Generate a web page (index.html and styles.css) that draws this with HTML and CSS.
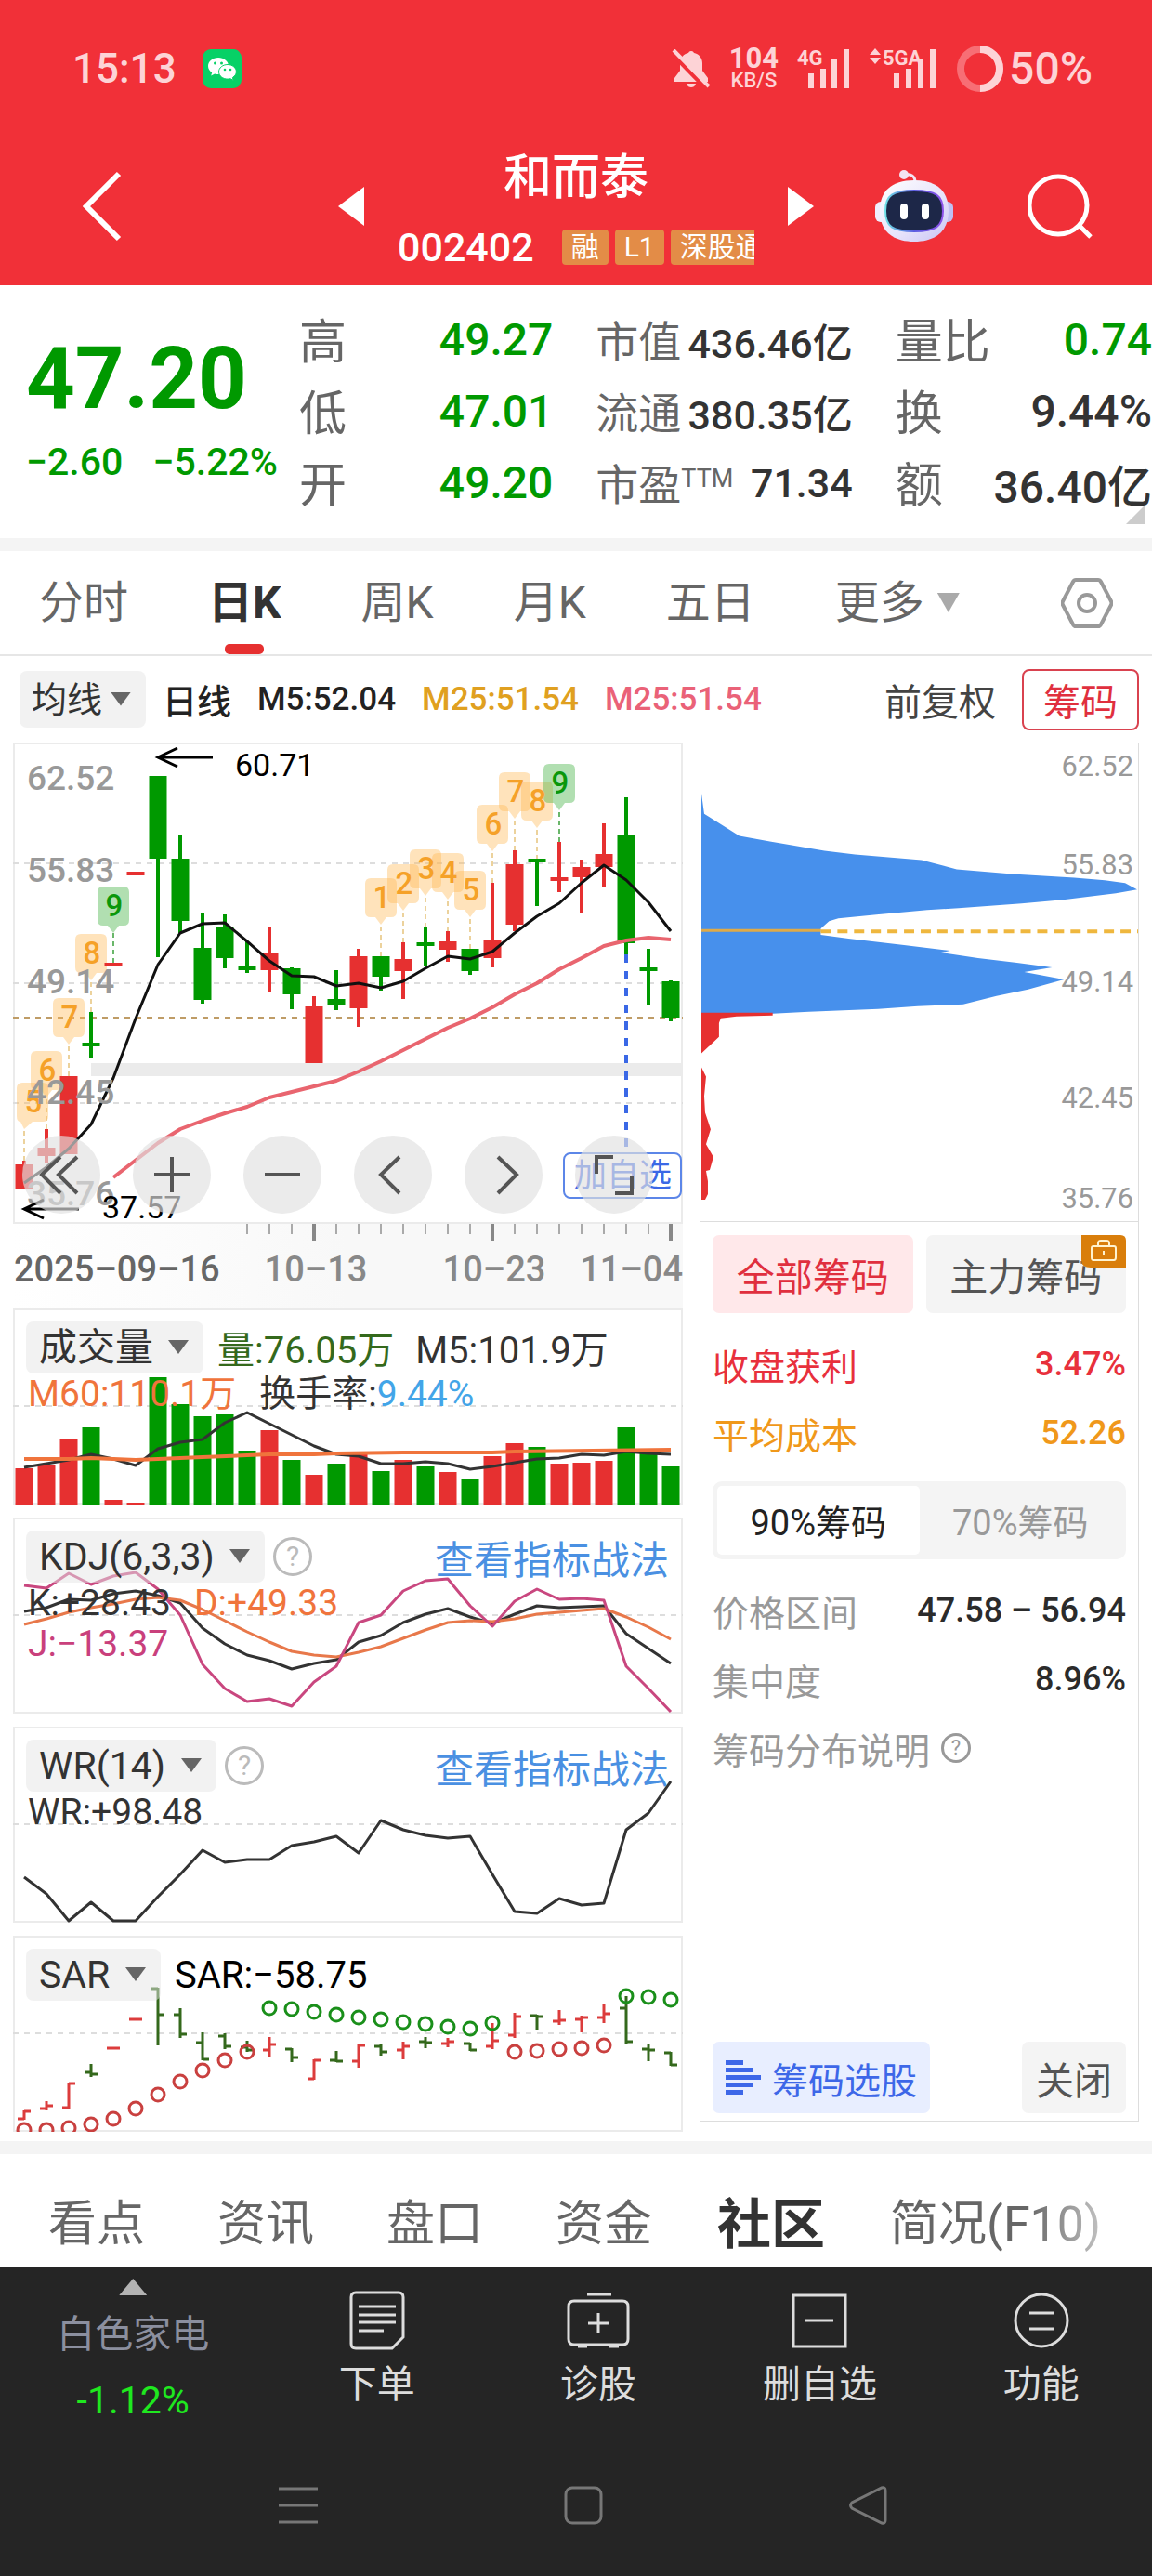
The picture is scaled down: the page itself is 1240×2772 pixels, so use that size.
FILE: index.html
```html
<!DOCTYPE html>
<html lang="zh-CN">
<head>
<meta charset="utf-8">
<meta name="viewport" content="width=device-width, initial-scale=1">
<title>和而泰 002402</title>
<link rel="stylesheet" href="styles.css">
</head>
<body>
<header class="top">
  <div class="status">
    <div class="status-side">
      <span class="clock">15:13</span>
      <svg class="wechat" width="42" height="42" viewBox="0 0 42 42" aria-label="微信">
        <rect width="42" height="42" rx="9" fill="#07d166"/>
        <path d="M17 9c-6.100 0-11 4-11 9 0 3 1.600 5.400 4.200 7l-1 3.600 3.900-2.100c1.300.400 2.500.500 3.900.500 6 0 11-4 11-9s-5-9-11-9z" fill="#fff"/>
        <path d="M27 16.500c-5.200 0-9.500 3.500-9.500 7.800s4.300 7.800 9.500 7.800c1.100 0 2.100-.1 3-.4l3.200 1.700-.8-2.900c2.400-1.500 4-3.700 4-6.200 0-4.300-4.200-7.800-9.400-7.800z" fill="#fff" stroke="#07d166"/>
        <g fill="#07d166"><circle cx="13.500" cy="15" r="1.500"/><circle cx="20.500" cy="15" r="1.500"/><circle cx="24" cy="22" r="1.300"/><circle cx="30" cy="22" r="1.300"/></g>
      </svg>
    </div>
    <div class="status-side status-right">
      <svg width="42" height="42" viewBox="0 0 42 42" fill="#fdd3d6" aria-label="静音">
        <path d="M21 2a3 3 0 0 1 3 2c5 1 9 5 9 11v8l6 8v4H3v-4l6-8v-8c0-6 4-10 9-11a3 3 0 0 1 3-2zM16 37h10c-1 3-3 4-5 4s-4-1-5-4z"/>
        <path d="M0 4 38 43" stroke="#f13038" stroke-width="5"/><path d="m2 1 38 39" stroke="#fdd3d6" stroke-width="4"/>
      </svg>
      <span class="speed"><b>104</b><small>KB/S</small></span>
      <svg width="58" height="46" viewBox="0 0 58 46" fill="#fdd3d6" aria-label="4G">
        <text class="net" x="0" y="19">4G</text>
        <path d="M12 28h6v16h-6zM25 23h6v21h-6zM37 12h6v32h-6zM50 2h6v42h-6z"/>
      </svg>
      <svg width="74" height="46" viewBox="0 0 74 46" fill="#fdd3d6" aria-label="5GA">
        <path d="m6 1 6 7H0zM0 11h12l-6 7z"/>
        <text class="net" x="14" y="19">5GA</text>
        <path d="M26 28h6v16h-6zM39 23h6v21h-6zM52 12h6v32h-6zM65 2h6v42h-6z"/>
      </svg>
      <svg width="50" height="50" viewBox="0 0 50 50" fill="none" stroke-width="8" aria-hidden="true">
        <circle cx="25" cy="25" r="21" stroke="#f76e75"/><path d="M25 4a21 21 0 0 1 0 42" stroke="#fdd3d6"/>
      </svg>
      <span class="battery">50%</span>
    </div>
  </div>
  <div class="titlebar">
    <button class="icon-btn back" aria-label="返回"><svg width="48" height="76" viewBox="0 0 48 76" fill="none" stroke="#fff" stroke-width="6"><path d="M42 3 7 38l35 35"/></svg></button>
    <div class="title-center">
      <button class="icon-btn" aria-label="上一只"><svg width="28" height="42" viewBox="0 0 28 42" fill="#fff"><path d="M28 0v42L0 21z"/></svg></button>
      <div class="stock">
        <h1>和而泰</h1>
        <div class="stock-code"><span>002402</span><i>融</i><i>L1</i><i>深股通</i></div>
      </div>
      <button class="icon-btn" aria-label="下一只"><svg width="28" height="42" viewBox="0 0 28 42" fill="#fff"><path d="M0 0v42l28-21z"/></svg></button>
    </div>
    <div class="title-actions">
      <button class="icon-btn" aria-label="智能助手">
        <svg width="84" height="78" viewBox="0 0 84 78">
          <defs>
            <linearGradient id="shell" x1="0" y1="0" x2="1" y2="1"><stop offset="0" stop-color="#fff"/><stop offset=".6" stop-color="#e6e2fb"/><stop offset="1" stop-color="#c8c4f4"/></linearGradient>
            <linearGradient id="rim" x1="0" y1="0" x2="1" y2="0"><stop offset="0" stop-color="#6fe0e6"/><stop offset=".5" stop-color="#5b5ce0"/><stop offset="1" stop-color="#8d52ea"/></linearGradient>
          </defs>
          <path d="M32 5c6-1 11 1 11 8" fill="none" stroke="#f3e4f2" stroke-width="3"/><circle cx="31" cy="5" r="5" fill="#f3e4f2"/>
          <rect x="0" y="34" width="14" height="22" rx="6" fill="#efeefe"/><rect x="70" y="34" width="14" height="22" rx="6" fill="#bfc0f2"/>
          <path d="M42 11c25 0 37 12 37 33S66 77 42 77 5 65 5 44s12-33 37-33z" fill="url(#shell)"/>
          <path d="M42 22c23 0 31 5 31 22s-8 22-31 22-31-5-31-22 8-22 31-22z" fill="#1d2748" stroke="url(#rim)" stroke-width="2"/>
          <rect x="27" y="36" width="8" height="17" rx="4" fill="#fff"/><rect x="50" y="36" width="8" height="17" rx="4" fill="#fff"/>
        </svg>
      </button>
      <button class="icon-btn" aria-label="搜索"><svg width="70" height="70" viewBox="0 0 70 70" fill="none" stroke="#fff" stroke-width="5"><circle cx="33" cy="34" r="31"/><path d="m55 55 13 13"/></svg></button>
    </div>
  </div>
</header>

<main>
<section class="quote">
  <div class="price">
    <strong>47.20</strong>
    <div class="change"><span>−2.60</span><span>−5.22%</span></div>
  </div>
  <dl class="stats stats-wide">
    <div><dt>高</dt><dd class="down">49.27</dd></div>
    <div><dt>低</dt><dd class="down">47.01</dd></div>
    <div><dt>开</dt><dd class="down">49.20</dd></div>
  </dl>
  <dl class="stats">
    <div><dt>市值</dt><dd>436.46亿</dd></div>
    <div><dt>流通</dt><dd>380.35亿</dd></div>
    <div><dt>市盈<sup>TTM</sup></dt><dd>71.34</dd></div>
  </dl>
  <dl class="stats stats-wide">
    <div><dt>量比</dt><dd class="down">0.74</dd></div>
    <div><dt>换</dt><dd>9.44%</dd></div>
    <div><dt>额</dt><dd>36.40亿</dd></div>
  </dl>
</section>

<nav class="periods">
  <a href="#">分时</a><a href="#" class="on" aria-current="page">日K</a><a href="#">周K</a><a href="#">月K</a><a href="#">五日</a><a href="#" class="more">更多</a>
  <button class="icon-btn gear" aria-label="设置"><svg width="56" height="56" viewBox="0 0 56 56" fill="none" stroke="#999" stroke-width="4"><path d="M16 3h24q2 0 3 2l11 21q1 2 0 4L43 51q-1 2-3 2H16q-2 0-3-2L2 30q-1-2 0-4L13 5q1-2 3-2z"/><circle cx="28" cy="28" r="9"/></svg></button>
</nav>

<div class="averages">
  <label class="pick"><select aria-label="均线指标"><option>均线</option></select></label>
  <span class="dark">日线</span><span class="dark ma">M5:52.04</span><span class="gold ma">M25:51.54</span><span class="rose ma">M25:51.54</span>
  <a href="#" class="adjust">前复权</a>
  <button class="chips-btn">筹码</button>
</div>

<div class="board">
<div class="charts">
  <div class="panel">
    <svg viewBox="14 799 721 518" role="img" aria-label="日K线图">
      <defs>
        <path id="tag" d="M-11 0h22q6 0 6 6v30q0 6-6 6H6L0 50l-6-8h-5q-6 0-6-6V6q0-6 6-6z"/>
      </defs>
      <path class="grid" d="M14 929h721M14 1058h721M14 1187h721"/>
      <path d="M98 1144h637v14H98z" fill="#ebebeb"/>
      <path d="M14 1095h721" stroke="#bf9c66" stroke-width="2" stroke-dasharray="6 6"/>
      <g class="lead">
        <path d="M26 1217v32M50 1183v32M74 1126v32M98 1057v32M410 997v32M434 982v32M458 966v32M482 970v32M506 989v32M530 918v32M554 883v32M578 893v32"/>
        <path class="lead-g" d="M122 1004v32M602 874v32"/>
      </g>
      <g class="tags">
        <path d="M24 1165h22q6 0 6 6v30q0 6-6 6H35l-9 8-4-8q-4 0-4-6v-30q0-6 6-6z"/>
        <use href="#tag" x="50" y="1131"/><use href="#tag" x="74" y="1074"/><use href="#tag" x="98" y="1005"/>
        <use href="#tag" x="410" y="945"/><use href="#tag" x="434" y="930"/><use href="#tag" x="458" y="914"/><use href="#tag" x="482" y="918"/><use href="#tag" x="506" y="937"/><use href="#tag" x="530" y="866"/><use href="#tag" x="554" y="831"/><use href="#tag" x="578" y="841"/>
        <use class="tag-g" href="#tag" x="122" y="954"/><use class="tag-g" href="#tag" x="602" y="822"/>
      </g>
      <g class="digits">
        <text x="36" y="1197">5</text><text x="51" y="1163">6</text><text x="75" y="1106">7</text><text x="99" y="1037">8</text><text class="digit-g" x="123" y="986">9</text>
        <text x="411" y="977">1</text><text x="435" y="962">2</text><text x="459" y="946">3</text><text x="483" y="950">4</text><text x="507" y="969">5</text><text x="531" y="898">6</text><text x="555" y="863">7</text><text x="579" y="873">8</text><text class="digit-g" x="603" y="854">9</text>
      </g>
      <path class="wick up" d="M26 1249V1280M50 1215V1251M290 997V1068M338 1072V1144M386 1021V1105M434 1014V1075M482 1002V1035M530 950V1041M554 915V1002M602 906V960M626 925V983M650 886V954"/>
      <path class="body up" d="M26 1253V1279M50 1235V1244M74 1158V1242M122 1036V1040M146 938V942M290 1026V1044M338 1083V1144M386 1029V1085M434 1032V1045M482 1013V1022M530 1012V1031M554 930V995M602 944V948M626 933V944M650 919V933"/>
      <path class="wick dn" d="M98 1089V1138M170 835V1030M194 899V1004M218 983V1080M242 984V1042M266 1013V1047M314 1041V1086M362 1044V1087M410 1029V1066M458 998V1039M506 1021V1049M578 925V975M674 858V1027M698 1021V1082M722 1055V1099"/>
      <path class="body dn" d="M98 1122V1126M170 835V924M194 924V991M218 1020V1076M242 998V1031M266 1040V1044M314 1042V1070M362 1075V1082M410 1029V1051M458 1014V1018M506 1021V1045M578 924V928M674 899V1015M698 1041V1045M722 1056V1095"/>
      <polyline class="line thick" stroke="#e9656f" points="122,1267 170,1230 194,1215 218,1206 242,1198 266,1191 290,1181 338,1169 362,1163 386,1153 410,1142 434,1130 458,1118 482,1106 506,1096 530,1084 554,1070 578,1058 602,1043 626,1031 650,1018 674,1012 698,1009 722,1011"/>
      <polyline class="line" stroke="#111" points="26,1273 50,1256 74,1236 98,1210 122,1160 146,1096 170,1038 194,1004 218,994 242,993 266,1013 290,1034 314,1050 338,1051 362,1061 386,1058 410,1063 434,1056 458,1042 482,1029 506,1032 530,1024 554,1004 578,986 602,972 626,950 650,931 674,947 698,971 722,1002"/>
      <path d="M674 1027v213" stroke="#3a68e6" stroke-width="4" stroke-dasharray="9 9"/>
      <g class="axis-y">
        <text x="29" y="850">62.52</text><text x="29" y="949">55.83</text><text x="29" y="1069">49.14</text><text x="29" y="1188">42.45</text><text x="29" y="1297">35.76</text>
      </g>
      <path d="M229 815h-58M191 805l-21 10 21 10M85 1301H27M47 1291l-21 10 21 10" fill="none" stroke="#000" stroke-width="3"/>
      <text class="peak" x="253" y="835">60.71</text><text class="peak" x="110" y="1311">37.57</text>
      <rect x="607" y="1241" width="126" height="48" rx="7" fill="#fff" stroke="#5c86e8" stroke-width="2"/>
      <text class="watch" x="618" y="1277">加自选</text>
    </svg>
    <div class="tools">
      <button aria-label="最左"><svg viewBox="0 0 84 84"><path d="M41 23 21 42l20 20M59 23 39 42l20 20"/></svg></button>
      <button aria-label="放大"><svg viewBox="0 0 84 84"><path d="M42 23v38M23 42h38"/></svg></button>
      <button aria-label="缩小"><svg viewBox="0 0 84 84"><path d="M23 42h38"/></svg></button>
      <button aria-label="左移"><svg viewBox="0 0 84 84"><path d="M49 23 29 42l20 20"/></svg></button>
      <button aria-label="右移"><svg viewBox="0 0 84 84"><path d="m36 23 20 19-20 20"/></svg></button>
      <button aria-label="全屏"><svg viewBox="0 0 84 84"><path d="M23 41V23h18M61 44v18H43"/></svg></button>
    </div>
  </div>
  <svg class="dates" viewBox="14 1317 721 91" role="img" aria-label="日期">
    <path d="M266 1317v11M290 1317v11M314 1317v11M362 1317v11M386 1317v11M410 1317v11M434 1317v11M458 1317v11M482 1317v11M506 1317v11M554 1317v11M578 1317v11M602 1317v11M626 1317v11M650 1317v11M674 1317v11M698 1317v11" stroke="#aaa" stroke-width="2"/>
    <path d="M338 1317v18M530 1317v18M722 1317v18" stroke="#888" stroke-width="4"/>
    <text x="15" y="1379" fill="#666">2025–09–16</text><text x="340" y="1379" text-anchor="middle">10–13</text><text x="532" y="1379" text-anchor="middle">10–23</text><text x="735" y="1379" text-anchor="end">11–04</text>
  </svg>

  <div class="panel">
    <svg viewBox="14 1408 721 211" role="img" aria-label="成交量">
      <path class="grid" d="M14 1513h721"/>
      <path class="body up" d="M26 1580V1619M50 1576V1619M74 1548V1619M122 1614V1619M146 1617V1619M290 1539V1619M338 1587V1619M386 1562V1619M434 1571V1619M482 1584V1619M530 1567V1619M554 1553V1619M602 1575V1619M626 1574V1619M650 1572V1619"/>
      <path class="body dn" d="M98 1536V1619M170 1482V1619M194 1511V1619M218 1524V1619M242 1522V1619M266 1561V1619M314 1571V1619M362 1575V1619M410 1583V1619M458 1578V1619M506 1592V1619M578 1557V1619M674 1536V1619M698 1564V1619M722 1578V1619"/>
      <polyline class="line" stroke="#333" points="26,1579 50,1575 74,1571 98,1565 122,1570 146,1577 170,1559 194,1552 218,1549 242,1531 266,1520 290,1532 314,1544 338,1556 362,1565 386,1567 410,1575 434,1575 458,1573 482,1575 506,1581 530,1578 554,1574 578,1570 602,1569 626,1565 650,1566 674,1562 698,1564 722,1565"/>
      <polyline class="line thick" stroke="#f0743c" points="26,1570 74,1570 98,1569 146,1571 218,1568 290,1565 338,1565 362,1564 434,1563 530,1563 554,1562 722,1560"/>
    </svg>
    <div class="readout">
      <div class="readout-row"><label class="pick"><select aria-label="成交量指标"><option>成交量</option></select></label><span class="moss">量:76.05万</span><span class="m5">M5:101.9万</span></div>
      <div class="values"><span class="orange">M60:110.1万</span><span>换手率:<em>9.44%</em></span></div>
    </div>
  </div>

  <div class="panel">
    <svg viewBox="14 1633 721 211" role="img" aria-label="KDJ">
      <path class="grid" d="M14 1738h721"/>
      <polyline class="line" stroke="#333" points="26,1734 50,1730 74,1721 98,1722 122,1715 146,1712 170,1717 194,1725 218,1752 242,1769 266,1781 290,1787 314,1796 338,1790 362,1786 386,1767 410,1760 434,1746 458,1737 482,1731 506,1740 530,1747 554,1737 578,1728 602,1730 626,1729 650,1728 674,1758 698,1774 722,1790"/>
      <polyline class="line" stroke="#e8784a" points="26,1748 50,1742 74,1735 98,1730 122,1726 146,1721 170,1719 194,1722 218,1732 242,1744 266,1756 290,1767 314,1777 338,1781 362,1783 386,1778 410,1772 434,1763 458,1754 482,1746 506,1744 530,1745 554,1742 578,1737 602,1735 626,1733 650,1731 674,1740 698,1751 722,1764"/>
      <polyline class="line" stroke="#c9477f" points="26,1706 50,1709 74,1693 98,1705 122,1696 146,1692 170,1710 194,1738 218,1791 242,1817 266,1831 290,1828 314,1836 338,1810 362,1793 386,1746 410,1738 434,1712 458,1701 482,1699 506,1728 530,1750 554,1723 578,1710 602,1721 626,1720 650,1722 674,1793 698,1817 722,1842"/>
    </svg>
    <div class="readout">
      <div class="readout-row"><label class="pick"><select aria-label="KDJ指标"><option>KDJ(6,3,3)</option></select></label><button class="help" aria-label="指标说明">?</button><a href="#" class="tactic">查看指标战法</a></div>
      <div class="values"><span>K:+28.43</span><span class="orange">D:+49.33</span></div>
      <div class="values"><span class="plum">J:−13.37</span></div>
    </div>
  </div>

  <div class="panel">
    <svg viewBox="14 1858 721 211" role="img" aria-label="WR">
      <path class="grid" d="M14 1963h721"/>
      <polyline class="line" stroke="#333" points="26,2020 50,2038 74,2067 98,2047 122,2067 146,2067 170,2041 194,2017 218,1991 242,2004 266,2001 290,2001 314,1986 338,1982 362,1976 386,1994 410,1959 434,1969 458,1975 482,1978 506,1976 530,2017 554,2057 578,2059 602,2043 626,2050 650,2048 674,1969 698,1951 722,1917"/>
    </svg>
    <div class="readout">
      <div class="readout-row"><label class="pick"><select aria-label="WR指标"><option>WR(14)</option></select></label><button class="help" aria-label="指标说明">?</button><a href="#" class="tactic">查看指标战法</a></div>
      <div class="values"><span>WR:+98.48</span></div>
    </div>
  </div>

  <div class="panel">
    <svg viewBox="14 2083 721 211" role="img" aria-label="SAR">
      <path class="grid" d="M14 2188h721"/>
      <path class="ohlc" stroke="#dc3c3c" d="M19 2280h7M26 2271V2281M26 2272h7M43 2269h7M50 2261V2271M50 2266h7M67 2268h7M74 2241V2269M74 2242h7M115 2204h14M139 2173h14M283 2206h7M290 2192V2213M290 2200h7M331 2237h7M338 2216V2238M338 2217h7M379 2218h7M386 2199V2225M386 2201h7M427 2206h7M434 2197V2216M434 2202h7M475 2199h7M482 2193V2203M482 2197h7M523 2202h7M530 2177V2205M530 2196h7M547 2190h7M554 2166V2193M554 2170h7M595 2175h7M602 2163V2179M602 2174h7M619 2173h7M626 2169V2187M626 2171h7M643 2171h7M650 2156V2177M650 2167h7"/>
      <path class="ohlc" stroke="#34691c" d="M91 2230h7M98 2221V2235M98 2232h7M163 2140h7M170 2139V2201M170 2168h7M187 2168h7M194 2161V2193M194 2189h7M211 2198h7M218 2187V2217M218 2216h7M235 2191h7M242 2188V2205M242 2202h7M259 2203h7M266 2196V2208M266 2206h7M307 2205h7M314 2204V2219M314 2214h7M355 2217h7M362 2207V2219M362 2218h7M403 2202h7M410 2200V2212M410 2208h7M451 2197h7M458 2192V2204M458 2198h7M499 2199h7M506 2198V2207M506 2206h7M571 2169h7M578 2168V2184M578 2170h7M667 2161h7M674 2148V2200M674 2197h7M691 2205h7M698 2199V2218M698 2206h7M715 2209h7M722 2208V2223M722 2222h7"/>
      <g class="dots" stroke="#c9403f"><circle cx="26" cy="2292" r="7"/><circle cx="50" cy="2292" r="7"/><circle cx="74" cy="2290" r="7"/><circle cx="98" cy="2286" r="7"/><circle cx="122" cy="2280" r="7"/><circle cx="146" cy="2269" r="7"/><circle cx="170" cy="2254" r="7"/><circle cx="194" cy="2240" r="7"/><circle cx="218" cy="2228" r="7"/><circle cx="242" cy="2217" r="7"/><circle cx="266" cy="2208" r="7"/><circle cx="554" cy="2208" r="7"/><circle cx="578" cy="2207" r="7"/><circle cx="602" cy="2205" r="7"/><circle cx="626" cy="2204" r="7"/><circle cx="650" cy="2201" r="7"/></g>
      <g class="dots" stroke="#1a8f1a"><circle cx="290" cy="2161" r="7"/><circle cx="314" cy="2162" r="7"/><circle cx="338" cy="2165" r="7"/><circle cx="362" cy="2168" r="7"/><circle cx="386" cy="2171" r="7"/><circle cx="410" cy="2173" r="7"/><circle cx="434" cy="2176" r="7"/><circle cx="458" cy="2178" r="7"/><circle cx="482" cy="2181" r="7"/><circle cx="506" cy="2183" r="7"/><circle cx="530" cy="2177" r="7"/><circle cx="674" cy="2148" r="7"/><circle cx="698" cy="2149" r="7"/><circle cx="722" cy="2152" r="7"/></g>
    </svg>
    <div class="readout">
      <div class="readout-row"><label class="pick"><select aria-label="SAR指标"><option>SAR</option></select></label><span class="black">SAR:−58.75</span></div>
    </div>
  </div>
</div>

<aside class="chips">
  <svg viewBox="753 799 473 516" role="img" aria-label="筹码分布">
    <polygon fill="#4790ec" points="754,853 757,875 795,899 828,905 887,915 920,919 992,925 1030,935 1090,940 1157,944 1190,947 1212,950 1225,957 1202,961 1145,968 1100,972 1032,977 998,979 943,984 902,988 892,991 883,999 883,1006 913,1010 973,1017 1023,1023 1013,1025 1053,1031 1095,1036 1133,1041 1103,1046 1146,1054 1107,1065 1073,1072 1037,1081 988,1083 945,1086 870,1089 831,1091 754,1091"/>
    <path fill="#e63030" d="M754 1090h77v3l-39 1-17 2-2 5v15l-19 18zM754 1149l5 10-2 21 1 18 6 18-5 16 8 14-4 14-4 1 2 11v14l-3 6h-4z"/>
    <path d="M754 1001h129" stroke="#dfaa48" stroke-width="3"/><path d="M883 1002h343" stroke="#efb73e" stroke-width="4" stroke-dasharray="11 7"/>
    <g class="axis-chip"><text x="1221" y="834">62.52</text><text x="1221" y="941">55.83</text><text x="1221" y="1067">49.14</text><text x="1221" y="1193">42.45</text><text x="1221" y="1301">35.76</text></g>
  </svg>
  <div class="chip-body">
    <div class="chip-tabs">
      <button class="on">全部筹码</button>
      <button class="locked">主力筹码<svg width="48" height="35" viewBox="0 0 48 35"><path d="M6 0h36q6 0 6 6v29H10Q0 35 0 27V0z" fill="#d97e0b"/><path d="M13 12h22q2 0 2 2v10q0 3-2 3H13q-2 0-2-3V14q0-2 2-2zM18 12V9q0-3 3-3h6q3 0 3 3v3M24 17v5" fill="none" stroke="#fff3cf" stroke-width="2"/></svg></button>
    </div>
    <dl class="facts">
      <div class="red"><dt>收盘获利</dt><dd>3.47%</dd></div>
      <div class="amber"><dt>平均成本</dt><dd>52.26</dd></div>
    </dl>
    <div class="segment"><button class="on">90%筹码</button><button>70%筹码</button></div>
    <dl class="facts">
      <div><dt>价格区间</dt><dd>47.58 – 56.94</dd></div>
      <div><dt>集中度</dt><dd>8.96%</dd></div>
    </dl>
    <a href="#" class="explain">筹码分布说明<span class="help small">?</span></a>
    <div class="chip-foot">
      <button class="pick-stock"><svg width="38" height="38" viewBox="0 0 38 38" fill="#3d67e8"><path d="M0 0h19v5H0zM0 8h29v5H0zM0 16h38v5H0zM0 24h29v5H0zM0 32h19v5H0z"/></svg>筹码选股</button>
      <button class="close">关闭</button>
    </div>
  </div>
</aside>
</div>

<nav class="sections">
  <a href="#">看点</a><a href="#">资讯</a><a href="#">盘口</a><a href="#">资金</a><a href="#" class="on" aria-current="page">社区</a><a href="#" class="fade">简况(F10)</a>
</nav>
</main>

<footer class="dock">
  <div class="dock-items">
    <a href="#" class="sector"><span>白色家电</span><b>-1.12%</b></a>
    <a href="#"><svg width="60" height="64" viewBox="0 0 60 64"><path d="M7 2h46q5 0 5 5v43L46 62H7q-5 0-5-5V7q0-5 5-5zM10 17h40M10 26h40M10 34h40M10 43h27"/></svg>下单</a>
    <a href="#"><svg width="68" height="64" viewBox="0 0 68 64"><path d="M22 4h26M8 11h52q6 0 6 6v35q0 6-6 6H8q-6 0-6-6V17q0-6 6-6zM34 24v22M23 35h22M12 60h10M46 60h10"/></svg>诊股</a>
    <a href="#"><svg width="60" height="64" viewBox="0 0 60 64"><path d="M2 5h56v55H2zM15 32h30"/></svg>删自选</a>
    <a href="#"><svg width="60" height="64" viewBox="0 0 60 64"><circle cx="30" cy="32" r="28"/><path d="M17 24h26M17 41h26"/></svg>功能</a>
  </div>
  <div class="sysnav">
    <button class="icon-btn" aria-label="菜单"><svg width="42" height="42" viewBox="0 0 42 42"><path d="M0 3h42M0 21h42M0 39h42"/></svg></button>
    <button class="icon-btn" aria-label="主页"><svg width="42" height="42" viewBox="0 0 42 42"><rect x="2" y="2" width="38" height="38" rx="7"/></svg></button>
    <button class="icon-btn" aria-label="返回"><svg width="42" height="42" viewBox="0 0 42 42"><path d="M35 2q4-1 4 3v32q0 4-4 3L3 24q-3-3 0-6z"/></svg></button>
  </div>
</footer>
</body>
</html>
```
FILE: styles.css
```css
* { box-sizing: border-box; margin: 0; padding: 0; }
body { font-family: Roboto, "Noto Sans CJK SC", sans-serif; color: #333; background: #fff; }
a { color: inherit; text-decoration: none; }
button, select { font: inherit; color: inherit; border: 0; background: none; cursor: pointer; }
i, em { font-style: normal; }
svg { display: block; }
.icon-btn { display: block; flex: none; }

/* status and title bars */
.top { background: #f13038; color: #fff; padding-bottom: 13px; }
.status { display: flex; justify-content: space-between; align-items: center; height: 148px; padding: 0 64px 0 78px; color: #fdd3d6; font-weight: 500; }
.status-side { display: flex; align-items: center; gap: 28px; }
.status-right { gap: 20px; }
.clock, .battery { font-size: 44px; line-height: 48px; }
.battery { margin-left: -14px; font-size: 48px; }
.speed { display: grid; justify-items: center; }
.speed b { font-size: 31px; line-height: 26px; }
.speed small { font-size: 22px; line-height: 22px; font-weight: 500; }
.net { font-size: 22px; font-weight: 700; }
.titlebar { display: grid; grid-template-columns: 1fr auto 1fr; align-items: center; padding: 0 64px; height: 146px; }
.back { margin-left: 22px; justify-self: start; }
.title-center { display: flex; align-items: center; gap: 36px; }
.stock { width: 384px; text-align: center; }
.stock h1 { font-size: 52px; line-height: 88px; font-weight: 500; }
.stock-code { display: flex; align-items: center; gap: 7px; height: 60px; overflow: hidden; white-space: nowrap; font-size: 43px; font-weight: 500; }
.stock-code span { margin-right: 23px; }
.stock-code i { flex: none; padding: 0 10px; border-radius: 4px; background: #e38c47; font-size: 30px; line-height: 38px; font-weight: 400; }
.title-actions { display: flex; justify-content: flex-end; align-items: center; gap: 80px; }

/* quote */
.quote { display: grid; grid-template-columns: 248px 273fr 276fr 276fr; column-gap: 46px; padding: 20px 0 21px 28px; border-bottom: 14px solid #f4f4f4; position: relative; }
.quote::after { content: ""; position: absolute; right: 8px; bottom: 15px; border-left: 20px solid transparent; border-bottom: 20px solid #ccc; }
.price { color: #009900; white-space: nowrap; padding-top: 34px; }
.price strong { display: block; font-size: 92px; line-height: 94px; }
.change { display: flex; gap: 32px; font-size: 41px; line-height: 84px; font-weight: 500; }
.stats > div { display: flex; justify-content: space-between; align-items: center; height: 77px; white-space: nowrap; }
.stats dt { padding-bottom: 4px; font-size: 46px; color: #666; }
.stats dd { font-size: 43px; font-weight: 500; }
.stats-wide dt { font-size: 51px; }
.stats-wide dd { font-size: 48px; }
.stats sup { font-size: 27px; line-height: 1; vertical-align: 14px; }
.stats .down { color: #009900; }

/* period tabs */
.periods { display: flex; align-items: center; gap: 86px; height: 113px; padding: 0 42px; border-bottom: 2px solid #e6e6e6; font-size: 48px; color: #666; }
.periods a { position: relative; line-height: 111px; white-space: nowrap; }
.periods .on { color: #333; font-weight: 700; }
.periods .on::after { content: ""; position: absolute; left: calc(50% - 21px); bottom: 0; width: 42px; height: 11px; border-radius: 5px; background: #e63030; }
.periods .more { display: flex; align-items: center; gap: 14px; }
.more::after { content: ""; width: 24px; height: 21px; background: #aaa; clip-path: polygon(0 0, 100% 0, 50% 100%); }
.gear { margin-left: auto; }

/* moving average row */
.averages { display: flex; align-items: center; gap: 28px; height: 93px; padding: 0 14px 0 21px; font-size: 37px; font-weight: 500; white-space: nowrap; }
.averages .pick { margin-right: -10px; }
.averages .pick select { height: 61px; padding: 0 46px 0 13px; font-size: 38px; }
.ma { font-size: 35px; }
.dark { color: #222; }
.gold { color: #e0a020; }
.rose { color: #ea6278; }
.adjust { margin-left: auto; font-size: 40px; font-weight: 400; color: #444; }
.chips-btn { width: 126px; height: 66px; border: 2px solid #d9424f; border-radius: 8px; font-size: 40px; font-weight: 400; color: #e02f3e; }

.pick { position: relative; display: block; flex: none; }
.pick select { appearance: none; display: block; height: 56px; padding: 0 54px 0 14px; border-radius: 8px; background: rgba(230, 230, 230, .5); font-size: 41px; font-weight: 400; color: #333; }
.pick::after { content: ""; position: absolute; right: 16px; top: calc(50% - 8px); width: 22px; height: 15px; background: #666; clip-path: polygon(0 0, 100% 0, 50% 100%); pointer-events: none; }

/* charts */
.board { display: grid; grid-template-columns: 721fr 473fr; gap: 18px; padding: 0 14px 10px; border-bottom: 14px solid #f4f4f4; }
.charts { min-width: 0; }
.panel { display: grid; box-shadow: inset 0 0 0 2px #ebebeb; }
.panel > * { grid-area: 1 / 1; min-width: 0; }
.panel + .panel { margin-top: 14px; }
.charts svg { width: 100%; height: auto; }
.grid { stroke: #ddd; stroke-width: 2; stroke-dasharray: 6 6; }
.wick { stroke-width: 4; fill: none; }
.body { stroke-width: 19; fill: none; }
.up { stroke: #e63030; }
.dn { stroke: #009900; }
.line { fill: none; stroke-width: 3; stroke-linejoin: round; }
.thick { stroke-width: 4; }
.ohlc { fill: none; stroke-width: 3; }
.dots { fill: none; stroke-width: 3; }
.lead { stroke: #ecd29c; stroke-width: 2; stroke-dasharray: 5 4; }
.lead-g { stroke: #6ab76a; }
.tags { fill: rgba(255, 184, 84, .4); }
.tag-g { fill: rgba(60, 175, 60, .4); }
.digits { font-size: 33px; font-weight: 500; fill: #f5a128; text-anchor: middle; }
.digit-g { fill: #0a970a; }
.axis-y { font-size: 37px; font-weight: 500; fill: #999; }
.axis-chip { font-size: 31px; fill: #999; text-anchor: end; }
.peak { font-size: 34px; fill: #000; }
.watch { font-size: 35px; fill: #3a68e6; }
.tools { align-self: end; display: flex; justify-content: space-between; padding: 0 32px 11px 10px; }
.tools button { width: 84px; height: 84px; border-radius: 50%; background: rgba(225, 225, 225, .66); }
.tools path { fill: none; stroke: #555; stroke-width: 4; }
.dates { background: linear-gradient(90deg, #fff, #f8f8f8 50%); font-size: 38px; font-weight: 500; fill: #888; }
.readout { padding: 14px 14px 0; font-size: 39px; font-weight: 400; color: #333; white-space: nowrap; overflow: hidden; }
.readout-row { display: flex; align-items: center; height: 56px; gap: 15px; font-size: 40px; }
.m5 { margin-left: 8px; }
.values { display: flex; gap: 25px; padding-left: 2px; line-height: 44px; }
.moss { color: #34691c; }
.orange { color: #f0743c; }
.plum { color: #c9407c; }
.black { color: #000; }
.values em { color: #42a5e8; }
.help { width: 42px; height: 42px; margin-left: -6px; border: 3px solid #bbb; border-radius: 50%; font-size: 30px; line-height: 34px; text-align: center; color: #bbb; }
.tactic { margin: 0 1px 0 auto; font-size: 42px; color: #4a90e2; }

/* chip distribution */
.chips { display: flex; flex-direction: column; margin-bottom: 11px; border: 1px solid #ddd; }
.chips > svg { width: 100%; height: auto; border-bottom: 1px solid #ddd; }
.chip-body { flex: 1; display: flex; flex-direction: column; padding: 14px 13px 8px; font-size: 39px; }
.chip-tabs { display: grid; grid-template-columns: 1fr 1fr; gap: 14px; margin-bottom: 18px; }
.chip-tabs button { position: relative; height: 84px; border-radius: 7px; background: #f4f4f4; font-size: 41px; color: #555; }
.chip-tabs .on { background: #ffe8ea; color: #e02f3e; }
.locked svg { position: absolute; top: 0; right: 0; }
.facts > div { display: flex; justify-content: space-between; align-items: center; height: 74px; white-space: nowrap; }
.facts dt { color: #999; }
.facts dd { font-size: 36px; font-weight: 500; color: #2b2b2b; }
.facts .red * { color: #e8303c; }
.facts .amber * { color: #f0981a; }
.segment { display: grid; grid-template-columns: 1fr 1fr; height: 84px; margin: 15px 0 18px; padding: 5px; border-radius: 10px; background: #f4f4f4; }
.segment button { border-radius: 5px; font-size: 38px; color: #999; }
.segment .on { background: #fff; color: #222; }
.explain { display: flex; align-items: center; gap: 12px; height: 74px; color: #999; }
.help.small { width: 32px; height: 32px; margin: 0; border-color: #999; font-size: 22px; line-height: 26px; color: #999; }
.chip-foot { display: flex; justify-content: space-between; margin-top: auto; }
.chip-foot button { height: 77px; border-radius: 7px; }
.pick-stock { display: flex; align-items: center; gap: 12px; padding: 0 14px; background: #e8eeff; color: #3d67e8; }
.close { padding: 0 15px; background: #f4f4f4; font-size: 41px; color: #555; }

/* section tabs */
.sections { display: flex; align-items: center; gap: 78px; height: 121px; padding: 20px 52px 0; font-size: 52px; color: #666; white-space: nowrap; }
.sections .on { margin: 0 -8px; font-size: 58px; font-weight: 700; color: #333; }
.fade { mask-image: linear-gradient(90deg, #000 65%, rgba(0, 0, 0, .4)); }

/* bottom bars */
.dock { background: #252525; color: #ddd; }
.dock-items { display: grid; grid-template-columns: 286fr repeat(4, 238fr); height: 186px; font-size: 41px; line-height: 50px; }
.dock-items a { display: flex; flex-direction: column; align-items: center; gap: 12px; padding-top: 26px; }
.dock-items svg { fill: none; stroke: #ddd; stroke-width: 3; }
.dock-items .sector { gap: 21px; padding-top: 13px; color: #8b8f9f; }
.sector::before { content: ""; width: 30px; height: 18px; margin-bottom: -4px; background: #b3b3b3; clip-path: polygon(0 100%, 100% 100%, 50% 0); }
.sector b { font-weight: 400; color: #1fe81f; }
.sysnav { display: flex; justify-content: center; gap: 265px; padding: 50px 0 56px 16px; }
.sysnav svg { fill: none; stroke: #777; stroke-width: 3; }
```
